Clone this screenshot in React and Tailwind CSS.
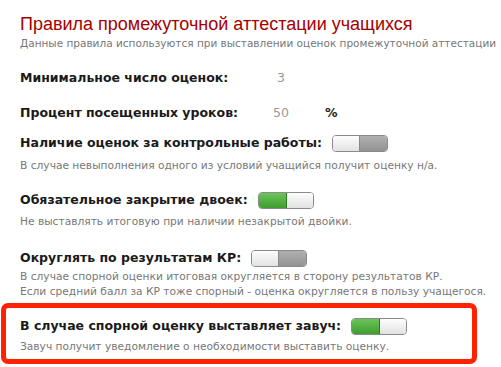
import React from 'react'

function Toggle({ on }) {
  return (
    <div className="flex h-[17px] w-[56px] overflow-hidden rounded-[4px] border border-[#8a8a8a] shadow-[inset_0_1px_0_rgba(255,255,255,0.5)]">
      {on ? (
        <>
          <div className="h-full w-[28px] border-r border-[#2d7a22] bg-[linear-gradient(#6cc35a,#3f9e2f)]" />
          <div className="h-full flex-1 bg-[linear-gradient(#fdfdfd,#e2e2e2)]" />
        </>
      ) : (
        <>
          <div className="h-full w-[27px] border-r border-[#8a8a8a] bg-[linear-gradient(#fdfdfd,#e2e2e2)]" />
          <div className="h-full flex-1 bg-[linear-gradient(#b0b0b0,#939393)]" />
        </>
      )}
    </div>
  )
}

function Row({ label, children }) {
  return (
    <div className="flex h-4 items-center">
      <span className="whitespace-nowrap text-[12.5px] font-bold leading-4 text-[#1a1a1a]">{label}</span>
      {children}
    </div>
  )
}

function Desc({ children, className = '' }) {
  return <p className={`whitespace-nowrap text-[10.65px] leading-[14px] text-[#777] ${className}`}>{children}</p>
}

export default function App() {
  return (
    <div className="h-[367px] w-[501px] overflow-hidden bg-white pl-5 pt-[13px] font-['DejaVu_Sans',sans-serif]">
      <h1 className="whitespace-nowrap font-['Liberation_Sans',sans-serif] text-[18px] leading-[22px] text-[#a50000]">
        Правила промежуточной аттестации учащихся
      </h1>
      <Desc className="mt-[1px] !text-[10.5px]">Данные правила используются при выставлении оценок промежуточной аттестации</Desc>

      <div className="mt-[20px] flex h-4 items-center">
        <span className="w-[241px] text-[12.5px] font-bold leading-4 text-[#1a1a1a]">Минимальное число оценок:</span>
        <span className="w-[40px] text-center text-[12.5px] text-[#999]">3</span>
      </div>

      <div className="mt-[19px] flex h-4 items-center">
        <span className="w-[241px] text-[12.5px] font-bold leading-4 text-[#1a1a1a]">Процент посещенных уроков:</span>
        <span className="w-[40px] text-center text-[12.5px] text-[#999]">50</span>
        <span className="ml-[24px] text-[12.5px] font-bold text-[#1a1a1a]">%</span>
      </div>

      <div className="mt-[14px]">
        <Row label="Наличие оценок за контрольные работы:">
          <div className="ml-[10px]"><Toggle on={false} /></div>
        </Row>
      </div>
      <Desc className="mt-[8px]">В случае невыполнения одного из условий учащийся получит оценку н/а.</Desc>

      <div className="mt-[19px]">
        <Row label="Обязательное закрытие двоек:">
          <div className="ml-[10px]"><Toggle on /></div>
        </Row>
      </div>
      <Desc className="mt-[7px]">Не выставлять итоговую при наличии незакрытой двойки.</Desc>

      <div className="mt-[21px]">
        <Row label="Округлять по результатам КР:">
          <div className="ml-[10px]"><Toggle on={false} /></div>
        </Row>
      </div>
      <Desc className="mt-[3px] leading-[15px]">
        В случае спорной оценки итоговая округляется в сторону результатов КР.<br />
        Если средний балл за КР тоже спорный - оценка округляется в пользу учащегося.
      </Desc>

      <div className="-ml-[19px] mt-[4px] w-[476px] rounded-[7px] border-[5px] border-[#ff2200] pb-[5px] pl-[14px] pt-[10px]">
        <Row label="В случае спорной оценку выставляет завуч:">
          <div className="ml-[10px]"><Toggle on /></div>
        </Row>
        <Desc className="mt-[6px]">Завуч получит уведомление о необходимости выставить оценку.</Desc>
      </div>
    </div>
  )
}
